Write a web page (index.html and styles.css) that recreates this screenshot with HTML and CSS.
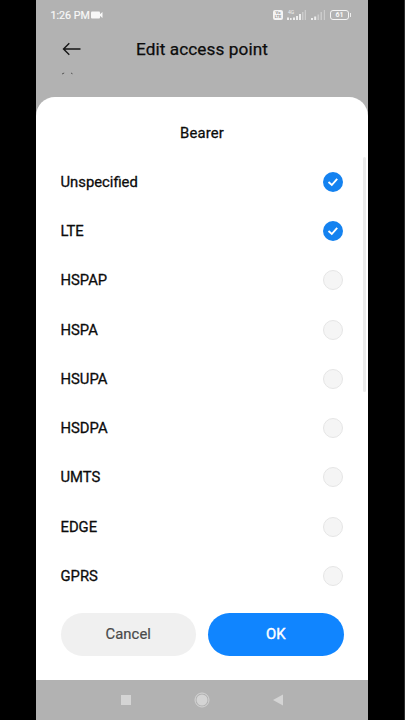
FILE: index.html
```
<!DOCTYPE html>
<html lang="en">
  <head>
    <meta charset="UTF-8" />
    <meta name="viewport" content="width=device-width, initial-scale=1.0" />
    <title>Edit access point</title>
    <link rel="stylesheet" href="styles.css">
  </head>
  <body>
    <div class="phone">
      <div class="status-bar">
        <span class="time">1:26 PM</span>
        <svg class="camera" width="12" height="8" viewBox="0 0 12 8">
          <rect x="0" y="0.5" width="9" height="7" rx="1" />
          <path d="M8 4 L11.5 1 V7 Z" />
        </svg>
        <div class="status-icons">
          <span class="volte"><span>Vo</span><span>LTE</span></span>
          <svg class="signal" width="21" height="12" viewBox="0 0 21 12">
            <text x="2" y="4.5">4G</text>
            <path d="M1 8.5h2v2.5h-2z M4 9h1.6v2h-1.6z M7 8.5h2v2.5h-2z M10 7h2v4h-2z M13 5h2v6h-2z" />
            <path class="weak" d="M16 3h1.5v8h-1.5z M18.7 1h1.3v10h-1.3z" />
          </svg>
          <svg class="signal" width="16" height="12" viewBox="0 0 16 12">
            <path d="M1 9h2v2h-2z M4.2 7.5h2v3.5h-2z" />
            <path class="weak" d="M7.5 5.5h1.6v5.5h-1.6z M10.5 3h1.5v8h-1.5z M13.8 1h1.2v10h-1.2z" />
          </svg>
          <span class="battery">61</span>
        </div>
      </div>

      <header class="app-bar">
        <svg class="back" width="20" height="14" viewBox="0 0 20 14">
          <path d="M18.5 7 H1.5 M7.3 1.2 L1.5 7 L7.3 12.8" />
        </svg>
        <h1>Edit access point</h1>
      </header>
      <div class="page-behind">
        <svg width="14" height="3" viewBox="0 0 14 3">
          <path d="M1 2 L3.2 1 M10 1 L11.5 1.8" />
        </svg>
      </div>

      <div class="sheet">
        <h2>Bearer</h2>
        <ul class="options">
          <li>Unspecified
            <span class="check checked"><svg width="20" height="20" viewBox="0 0 20 20"><path d="M5.5 10 L8.8 13 L14.2 6.8" /></svg></span>
          </li>
          <li>LTE
            <span class="check checked"><svg width="20" height="20" viewBox="0 0 20 20"><path d="M5.5 10 L8.8 13 L14.2 6.8" /></svg></span>
          </li>
          <li>HSPAP <span class="check"></span></li>
          <li>HSPA <span class="check"></span></li>
          <li>HSUPA <span class="check"></span></li>
          <li>HSDPA <span class="check"></span></li>
          <li>UMTS <span class="check"></span></li>
          <li>EDGE <span class="check"></span></li>
          <li>GPRS <span class="check"></span></li>
        </ul>
        <div class="scrollbar"></div>
        <div class="buttons">
          <button class="cancel">Cancel</button>
          <button class="ok">OK</button>
        </div>
      </div>

      <nav class="nav-bar">
        <svg width="10" height="10" viewBox="0 0 10 10">
          <rect width="10" height="10" />
        </svg>
        <svg width="16" height="16" viewBox="0 0 16 16">
          <circle cx="8" cy="8" r="5.5" />
          <circle class="ring" cx="8" cy="8" r="7" />
        </svg>
        <svg width="10" height="12" viewBox="0 0 10 12">
          <path d="M10 0.5 V11.5 L0 6 Z" />
        </svg>
      </nav>
    </div>
  </body>
</html>
```

FILE: styles.css
```
* {
  box-sizing: border-box;
}
body {
  margin: 0;
  background: #000000;
  border-right: 1px solid #2c2c2c;
  font-family: Roboto, "Noto Sans", sans-serif;
  color: #0c0c0c;
}
.phone {
  width: 332px;
  height: 720px;
  margin-left: 36px;
  background: #b2b2b2;
  display: flex;
  flex-direction: column;
  overflow: hidden;
}
.status-bar {
  height: 30px;
  padding: 0 17px 0 14.5px;
  display: flex;
  align-items: center;
  color: #f8f8f8;
}
.time {
  font-size: 10.7px;
  -webkit-text-stroke: 0.2px;
  width: 40px;
  white-space: nowrap;
}
.camera {
  fill: #f8f8f8;
}
.status-icons {
  margin-left: auto;
  display: flex;
  align-items: center;
  gap: 3px;
}
.volte {
  width: 10px;
  height: 10px;
  border-radius: 2px;
  background: #f4f4f4;
  color: #999999;
  font-size: 4px;
  font-weight: 700;
  line-height: 4px;
  display: flex;
  flex-direction: column;
  align-items: center;
  justify-content: center;
}
.signal {
  fill: #eeeeee;
}
.signal text {
  font-size: 5px;
}
.signal .weak {
  fill: #cccccc;
}
.battery {
  position: relative;
  width: 19px;
  height: 10px;
  margin: 0 2px 0 1px;
  border: 1.5px solid #f4f4f4;
  border-radius: 3px;
  font-size: 7px;
  font-weight: 700;
  line-height: 8px;
  text-align: center;
}
.battery::after {
  content: "";
  position: absolute;
  top: 2px;
  right: -3px;
  width: 1px;
  height: 4px;
  background: #eeeeee;
}
.app-bar {
  height: 38px;
  padding-left: 26px;
  display: flex;
  align-items: center;
}
.back {
  fill: none;
  stroke: #161616;
  stroke-width: 1.4;
}
h1 {
  margin: 0 0 0 54px;
  font-size: 17.2px;
  font-weight: 400;
  letter-spacing: 0.08px;
  -webkit-text-stroke: 0.25px;
}
.page-behind {
  height: 29px;
  padding: 4px 0 0 25px;
  display: flex;
  align-items: flex-start;
}
.page-behind path {
  stroke: #555555;
  stroke-width: 1;
}
.sheet {
  position: relative;
  height: 583px;
  padding: 25.5px 24.5px 0;
  background: #ffffff;
  border-radius: 19px 19px 0 0;
}
h2 {
  margin: 0;
  height: 20px;
  line-height: 20px;
  font-size: 14.8px;
  font-weight: 400;
  letter-spacing: 0.2px;
  text-align: center;
  -webkit-text-stroke: 0.3px;
}
.options {
  margin: 0;
  padding: 14.8px 0 0;
  list-style: none;
}
.options li {
  height: 49.25px;
  display: flex;
  align-items: center;
  justify-content: space-between;
  font-size: 14.8px;
  -webkit-text-stroke: 0.3px;
}
.check {
  width: 20px;
  height: 20px;
  margin-right: 1px;
  border: 1px solid #e6e6e6;
  border-radius: 50%;
  background: #f5f5f5;
}
.check.checked {
  border: none;
  background: #1482f0;
}
.check svg {
  display: block;
  fill: none;
  stroke: #ffffff;
  stroke-width: 1.9;
}
.scrollbar {
  position: absolute;
  top: 60px;
  right: 2px;
  width: 3px;
  height: 235px;
  border-radius: 2px;
  background: #ebebeb;
}
.buttons {
  margin-top: 12.2px;
  display: flex;
  gap: 12px;
}
.buttons button {
  flex: 1;
  height: 43px;
  padding: 0;
  border: none;
  border-radius: 22px;
  font-family: inherit;
  font-size: 14.8px;
  letter-spacing: 0.1px;
  -webkit-text-stroke: 0.2px;
}
.cancel {
  background: #f0f0f0;
  color: #4a4a4a;
}
.buttons .ok {
  background: #1085ff;
  color: #ffffff;
  -webkit-text-stroke: 0.4px;
}
.nav-bar {
  flex: 1;
  padding: 0 85px 0 85px;
  display: flex;
  align-items: center;
  justify-content: space-between;
}
.nav-bar svg {
  fill: #d4d4d4;
}
.nav-bar .ring {
  fill: none;
  stroke: #d4d4d4;
  stroke-width: 1;
}
```
